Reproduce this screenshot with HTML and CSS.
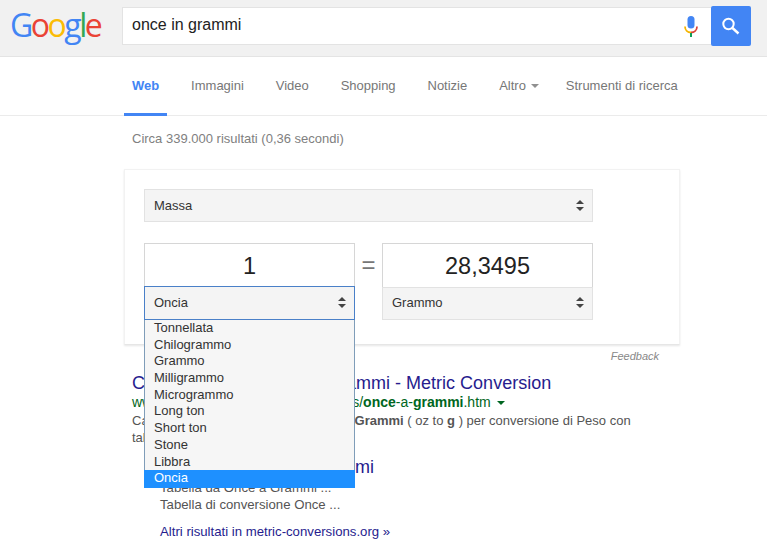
FILE: index.html
```html
<!DOCTYPE html>
<html lang="it">
<head>
<meta charset="utf-8">
<title>once in grammi</title>
<link rel="stylesheet" href="styles.css">
</head>
<body>
<header class="topbar">
  <div class="logo"><span class="b">G</span><span class="r">o</span><span class="y">o</span><span class="b">g</span><span class="g">l</span><span class="r">e</span></div>
  <div class="search">
    <div class="query">once in grammi</div>
    <svg class="mic" width="14" height="21" viewBox="0 0 14 21"><rect x="3.500" y="0" width="7" height="12.500" rx="3.500" fill="#4285f4"/><path d="M1 10.500c0 3.500 2.600 6 6 6" fill="none" stroke="#f4b400" stroke-width="1.800"/><path d="M7 16.500c3.400 0 6-2.500 6-6" fill="none" stroke="#db4437" stroke-width="1.800"/><rect x="6" y="17" width="2" height="4" fill="#0f9d58"/></svg>
    <button class="go"><svg width="18" height="18" viewBox="0 0 18 18"><circle cx="6.500" cy="7" r="5.200" fill="none" stroke="#fff" stroke-width="2"/><path d="M10.500 11 16.500 16.500" stroke="#fff" stroke-width="2.400"/></svg></button>
  </div>
</header>
<nav class="tabs">
  <a class="tab active">Web</a>
  <a class="tab">Immagini</a>
  <a class="tab">Video</a>
  <a class="tab">Shopping</a>
  <a class="tab">Notizie</a>
  <a class="tab">Altro<i class="caret"></i></a>
  <a class="tab">Strumenti di ricerca</a>
</nav>
<main class="content">
  <div class="stats">Circa 339.000 risultati (0,36 secondi)</div>
  <section class="card">
    <div class="select wide"><span>Massa</span><i class="updown"></i></div>
    <div class="convert">
      <div class="unit">
        <div class="value">1</div>
        <div class="select focus"><span>Oncia</span><i class="updown"></i></div>
        <ul class="menu">
          <li>Tonnellata</li><li>Chilogrammo</li><li>Grammo</li><li>Milligrammo</li><li>Microgrammo</li><li>Long ton</li><li>Short ton</li><li>Stone</li><li>Libbra</li><li class="sel">Oncia</li>
        </ul>
      </div>
      <div class="equals">=</div>
      <div class="unit">
        <div class="value">28,3495</div>
        <div class="select plain"><span>Grammo</span><i class="updown"></i></div>
      </div>
    </div>
  </section>
  <div class="feedback">Feedback</div>
  <article class="result">
    <h3 class="title">Conversione da Once a Grammi - Metric Conversion</h3>
    <div class="url">www.metric-conversions.org/it/pesos/<b>once</b>-a-<b>grammi</b>.htm <i class="urlcaret"></i></div>
    <p class="snip">Calcolatrice di conversione da Once a <b>Grammi</b> ( oz to <b>g</b> ) per conversione di Peso con</p>
    <p class="snip">tabelle e formule.</p>
    <div class="sitelinks">
      <h3 class="title sub">Tabella da Once a Grammi</h3>
      <div>Tabella da Once a Grammi ...</div>
      <div>Tabella di conversione Once ...</div>
      <a class="more">Altri risultati in metric-conversions.org »</a>
    </div>
  </article>
</main>
</body>
</html>
```
FILE: styles.css
```css
* { box-sizing: border-box; }
html, body { margin: 0; height: 547px; overflow: hidden; }
body { background: #fff; font-family: "Liberation Sans", Arial, sans-serif; color: #222; }

.topbar { height: 57px; background: #f1f1f1; border-bottom: 1px solid #e4e4e4; display: flex; align-items: flex-start; padding: 6px 0 0 10px; }
.logo { width: 112px; flex-shrink: 0; font-family: "Open Sans", "Liberation Sans", sans-serif; font-size: 32px; line-height: 38px; letter-spacing: -2.500px; font-weight: 400; }
.logo .b { color: #4285f4; } .logo .r { color: #ea4335; } .logo .y { color: #fbbc05; } .logo .g { color: #34a853; }
.search { width: 629px; height: 40px; display: flex; align-items: center; }
.query { flex: 1; height: 38px; background: #fff; border: 1px solid #e3e3e3; border-right: 0; font-size: 16px; line-height: 33px; padding-left: 9px; color: #222; }
.mic { position: relative; margin-left: -27px; margin-right: 13px; margin-top: 1px; z-index: 1; flex-shrink: 0; }
.go { width: 40px; height: 40px; flex-shrink: 0; background: #4285f4; border: 0; border-radius: 2px; padding: 0; display: flex; align-items: center; justify-content: center; }

.tabs { height: 59px; border-bottom: 1px solid #ebebeb; display: flex; gap: 31.900px; padding-left: 132px; font-size: 13px; line-height: 58px; color: #777; }
.tab { position: relative; height: 58px; }
.tab.active { color: #4285f4; font-weight: 700; }
.tab.active::after { content: ""; position: absolute; left: -8px; right: -8px; bottom: -1px; height: 3px; background: #4285f4; }
.caret { display: inline-block; width: 0; height: 0; border: 4px solid transparent; border-top-color: #909090; border-bottom: 0; vertical-align: 2px; margin: 0 -5px 0 5px; }

.content { padding-left: 124px; width: 700px; }
.stats { padding: 15px 0 0 8px; height: 53px; font-size: 13px; line-height: 16px; color: #808080; }
.card { width: 556px; height: 176px; padding: 19px 0 0 20px; border: 1px solid #f2f2f2; border-bottom: 1px solid #e6e6e6; box-shadow: 0 1px 2px rgba(0, 0, 0, .1); background: #fff; }
.select { height: 33px; background: #f4f4f4; border: 1px solid #e2e2e2; display: flex; align-items: center; justify-content: space-between; padding: 0 8px 0 9px; font-size: 13px; color: #333; position: relative; }
.select.wide { width: 449px; margin-left: -1px; }
.select.plain { padding-bottom: 2px; }
.select.focus { border: 1px solid #4a80c8; height: 34px; margin-top: -1px; padding-bottom: 2px; }
.updown { width: 8px; height: 11px; display: block; position: relative; }
.updown::before, .updown::after { content: ""; position: absolute; left: 0; width: 0; height: 0; border-left: 4px solid transparent; border-right: 4px solid transparent; }
.updown::before { top: 0; border-bottom: 4px solid #444; }
.updown::after { bottom: 0; border-top: 4px solid #444; }

.convert { display: flex; margin: 21px 0 0 -1px; }
.unit { width: 211px; position: relative; }
.value { height: 44px; background: #fff; border: 1px solid #d6d6d6; border-bottom: 0; text-align: center; font-size: 23.500px; line-height: 44px; color: #222; }
.equals { width: 27px; text-align: center; font-size: 24px; line-height: 44px; color: #777; }
.menu { position: absolute; left: 0; top: 77px; width: 211px; height: 168px; margin: 0; padding: 0; list-style: none; background: #f6f6f6; border: 1px solid #7f9db9; border-top: 0; z-index: 5; font-size: 13px; color: #333; }
.menu li { height: 16.700px; line-height: 16.700px; padding-left: 9px; }
.menu li.sel { background: #1e90ff; color: #fff; margin: 0 -1px; padding-left: 10px; height: 18px; }

.feedback { width: 535px; text-align: right; font-size: 11px; font-style: italic; color: #888; height: 22px; padding-top: 4px; line-height: 14px; }
.result { padding: 0 0 0 8px; width: 530px; }
.title { margin: 0; font-size: 18px; line-height: 21px; font-weight: 400; color: #261c8e; padding-top: 6px; height: 26px; white-space: nowrap; }
.url { font-size: 14px; line-height: 16px; color: #006621; height: 18px; padding-top: 1px; white-space: nowrap; }
.urlcaret { display: inline-block; width: 0; height: 0; border: 4px solid transparent; border-top-color: #006621; border-bottom: 0; vertical-align: 2px; margin-left: 2px; }
.snip { margin: 0; font-size: 13px; line-height: 17px; color: #545454; position: relative; top: 1px; white-space: nowrap; }
.title.sub { margin-top: 6px; height: 28px; }
.sitelinks { padding-left: 28px; font-size: 13.200px; line-height: 17px; color: #545454; }
.more { display: block; color: #261c8e; margin-top: 10px; }
```
